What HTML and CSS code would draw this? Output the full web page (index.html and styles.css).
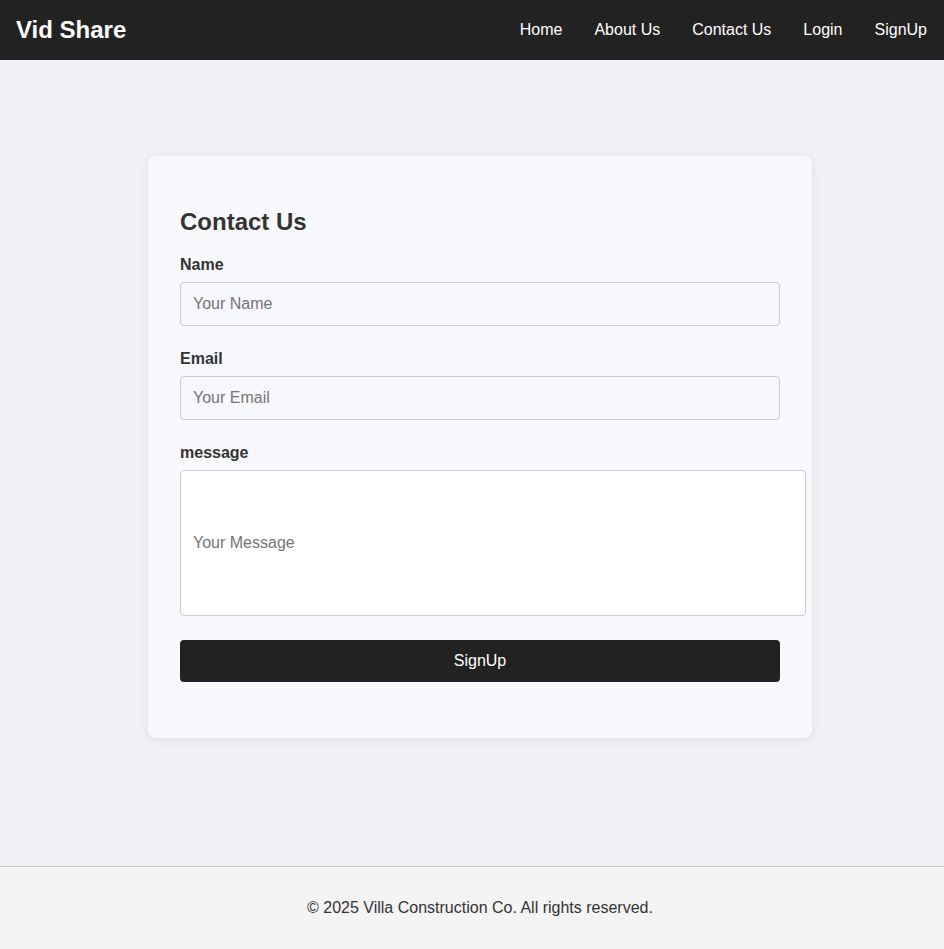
FILE: index.html
```html
<!DOCTYPE html>
<html lang="en">
<head>
<meta charset="utf-8">
<title>Vid Share - Contact Us</title>
<link rel="stylesheet" href="styles.css">
</head>
<body>
<header class="topbar">
  <div class="brand">Vid Share</div>
  <nav class="nav">
    <a href="#">Home</a>
    <a href="#">About Us</a>
    <a href="#">Contact Us</a>
    <a href="#">Login</a>
    <a href="#">SignUp</a>
  </nav>
</header>
<main class="main">
  <section class="card">
    <h2 class="card-title">Contact Us</h2>
    <form class="form">
      <div class="group">
        <label class="label" for="name">Name</label>
        <input class="field" id="name" type="text" placeholder="Your Name">
      </div>
      <div class="group">
        <label class="label" for="email">Email</label>
        <input class="field" id="email" type="email" placeholder="Your Email">
      </div>
      <div class="group">
        <label class="label" for="msg">message</label>
        <input class="field-msg" id="msg" type="text" placeholder="Your Message">
      </div>
      <button class="btn" type="button">SignUp</button>
    </form>
  </section>
</main>
<footer class="footer">© 2025 Villa Construction Co. All rights reserved.</footer>
</body>
</html>
```

FILE: styles.css
```css
html, body {
  margin: 0;
  padding: 0;
}
body {
  font-family: "Liberation Sans", Arial, sans-serif;
  font-size: 16px;
  color: #333;
  background: #f0f1f4;
  min-height: 100vh;
  display: flex;
  flex-direction: column;
}
.topbar {
  height: 60px;
  background: #222;
  display: flex;
  align-items: center;
  justify-content: space-between;
  padding: 0 17px 0 16px;
  box-sizing: border-box;
}
.brand {
  color: #fff;
  font-size: 24px;
  font-weight: bold;
}
.nav {
  display: flex;
  gap: 32px;
}
.nav a {
  color: #fff;
  text-decoration: none;
  font-size: 16px;
}
.main {
  flex: 1;
  padding-left: 16px;
}
.card {
  width: 664px;
  box-sizing: border-box;
  margin: 96px auto 0;
  background: #f8f9fc;
  border-radius: 8px;
  box-shadow: 0 2px 10px rgba(0, 0, 0, 0.08);
  padding: 32px 32px 56px;
}
.card-title {
  font-size: 24px;
  margin: 20px 0 20px;
  color: #333;
  line-height: 28px;
}
.form {
  display: flex;
  flex-direction: column;
}
.group {
  display: flex;
  flex-direction: column;
  align-items: flex-start;
  margin-bottom: 24px;
}
.label {
  font-weight: bold;
  font-size: 16px;
  line-height: 18px;
  margin-bottom: 8px;
  color: #333;
}
.field {
  width: 100%;
  box-sizing: border-box;
  height: 44px;
  padding: 12px;
  border: 1px solid #ccc;
  border-radius: 4px;
  background: #f7f8fb;
  font-family: "Liberation Sans", Arial, sans-serif;
  font-size: 16px;
  color: #333;
}
.field-msg {
  width: 600px;
  height: 120px;
  padding: 12px;
  border: 1px solid #ccc;
  border-radius: 4px;
  background: #fff;
  font-family: "Liberation Sans", Arial, sans-serif;
  font-size: 16px;
  color: #333;
}
.field::placeholder,
.field-msg::placeholder {
  color: #757575;
}
.btn {
  width: 100%;
  height: 42px;
  background: #222;
  color: #fff;
  border: none;
  border-radius: 4px;
  font-family: "Liberation Sans", Arial, sans-serif;
  font-size: 16px;
  cursor: pointer;
}
.footer {
  background: #f4f4f4;
  border-top: 1px solid #ccc;
  padding: 32px 0 32px 16px;
  text-align: center;
  line-height: 18px;
  color: #333;
  font-size: 16px;
}
```
